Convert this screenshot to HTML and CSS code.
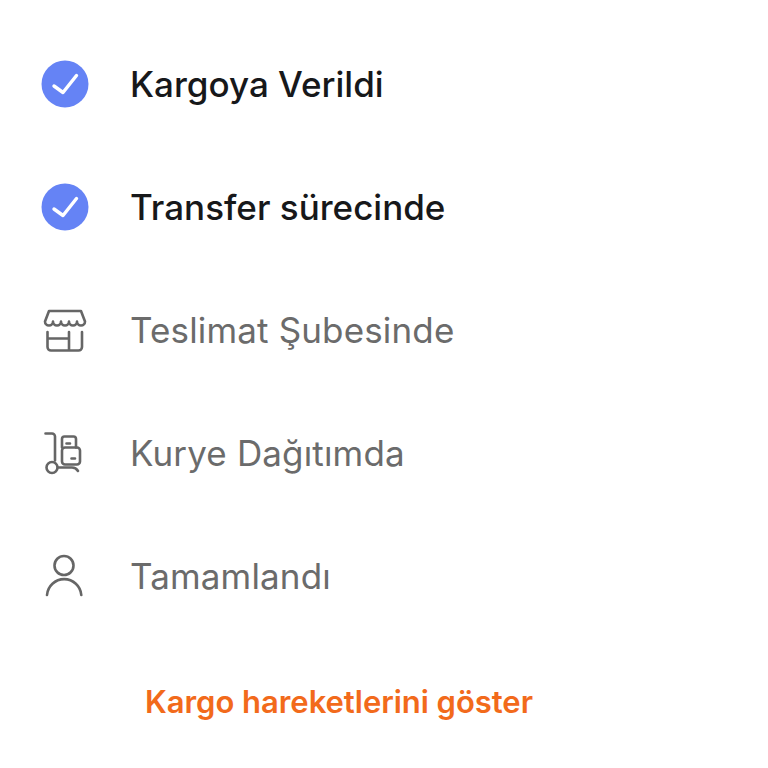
FILE: index.html
```html
<!DOCTYPE html>
<html lang="tr">
<head>
  <meta charset="UTF-8">
  <title>Kargo Takip</title>
  <link rel="stylesheet" href="styles.css">
</head>
<body>
  <ul class="steps">
    <li class="step done">
      <svg class="step-icon" viewBox="0 0 48 48"><circle cx="24" cy="24" r="23.5" fill="#6583f5"/><path d="M13 26l9 6.5L35.5 15.5" fill="none" stroke="#fff" stroke-width="3.4" stroke-linecap="round" stroke-linejoin="round"/></svg>
      <span>Kargoya Verildi</span>
    </li>
    <li class="step done">
      <svg class="step-icon" viewBox="0 0 48 48"><circle cx="24" cy="24" r="23.5" fill="#6583f5"/><path d="M13 26l9 6.5L35.5 15.5" fill="none" stroke="#fff" stroke-width="3.4" stroke-linecap="round" stroke-linejoin="round"/></svg>
      <span>Transfer sürecinde</span>
    </li>
    <li class="step">
      <svg class="step-icon" viewBox="0 0 48 48" fill="none" stroke="#666" stroke-width="2.6" stroke-linecap="round" stroke-linejoin="round"><path d="M8 5H40L44 15.5a4 4 0 0 1-8 0a4 4 0 0 1-8 0a4 4 0 0 1-8 0a4 4 0 0 1-8 0a4 4 0 0 1-8 0z"/><path d="M6.5 26V41a3.5 3.5 0 0 0 3.5 3.5h27.5A3.5 3.500 0 0 0 41 41V26M6.5 32.500H28M28 26v18.5"/></svg>
      <span>Teslimat Şubesinde</span>
    </li>
    <li class="step">
      <svg class="step-icon" viewBox="0 0 48 48" fill="none" stroke="#666" stroke-width="2.6" stroke-linecap="round" stroke-linejoin="round"><path d="M4.5 4.5H11a3 3 0 0 1 3 3v24"/><circle cx="11" cy="38.5" r="5.5"/><path d="M17 38.5h14c3 0 4.5 1 6 3.5"/><path d="M21 18.5V10a2.5 2.5 0 0 1 2.5-2.5h9A2.5 2.5 0 0 1 35 10v8.5"/><rect x="21" y="18.5" width="18" height="17" rx="3"/><path d="M25.5 14.5h3.5M30.5 29.5h3.5"/></svg>
      <span>Kurye Dağıtımda</span>
    </li>
    <li class="step">
      <svg class="step-icon" viewBox="0 0 48 48" fill="none" stroke="#666" stroke-width="2.6" stroke-linecap="round"><circle cx="23" cy="13.5" r="9.5"/><path d="M6 43a17.2 17.2 0 0 1 34.300 0"/></svg>
      <span>Tamamlandı</span>
    </li>
  </ul>
  <a class="moves-link" href="#">Kargo hareketlerini göster</a>
</body>
</html>
```

FILE: styles.css
```css
body {
  margin: 0;
  padding: 22px 0 0 41px;
  background-color: #ffffff;
  font-family: Inter, "Noto Sans", sans-serif;
}
.steps {
  list-style: none;
  margin: 0;
  padding: 0;
}
.step {
  display: flex;
  align-items: center;
  gap: 41px;
  height: 123.2px;
  font-size: 35px;
  letter-spacing: 0.15px;
  color: #6b6b6b;
}
.step-icon {
  width: 48px;
  height: 48px;
  flex-shrink: 0;
}
.done {
  color: #17181a;
  font-weight: 500;
  letter-spacing: 0;
}
.moves-link {
  display: block;
  margin: 45px 0 0 104px;
  font-size: 31px;
  font-weight: 600;
  letter-spacing: -0.04px;
  color: #f26a1b;
  text-decoration: none;
}
```
